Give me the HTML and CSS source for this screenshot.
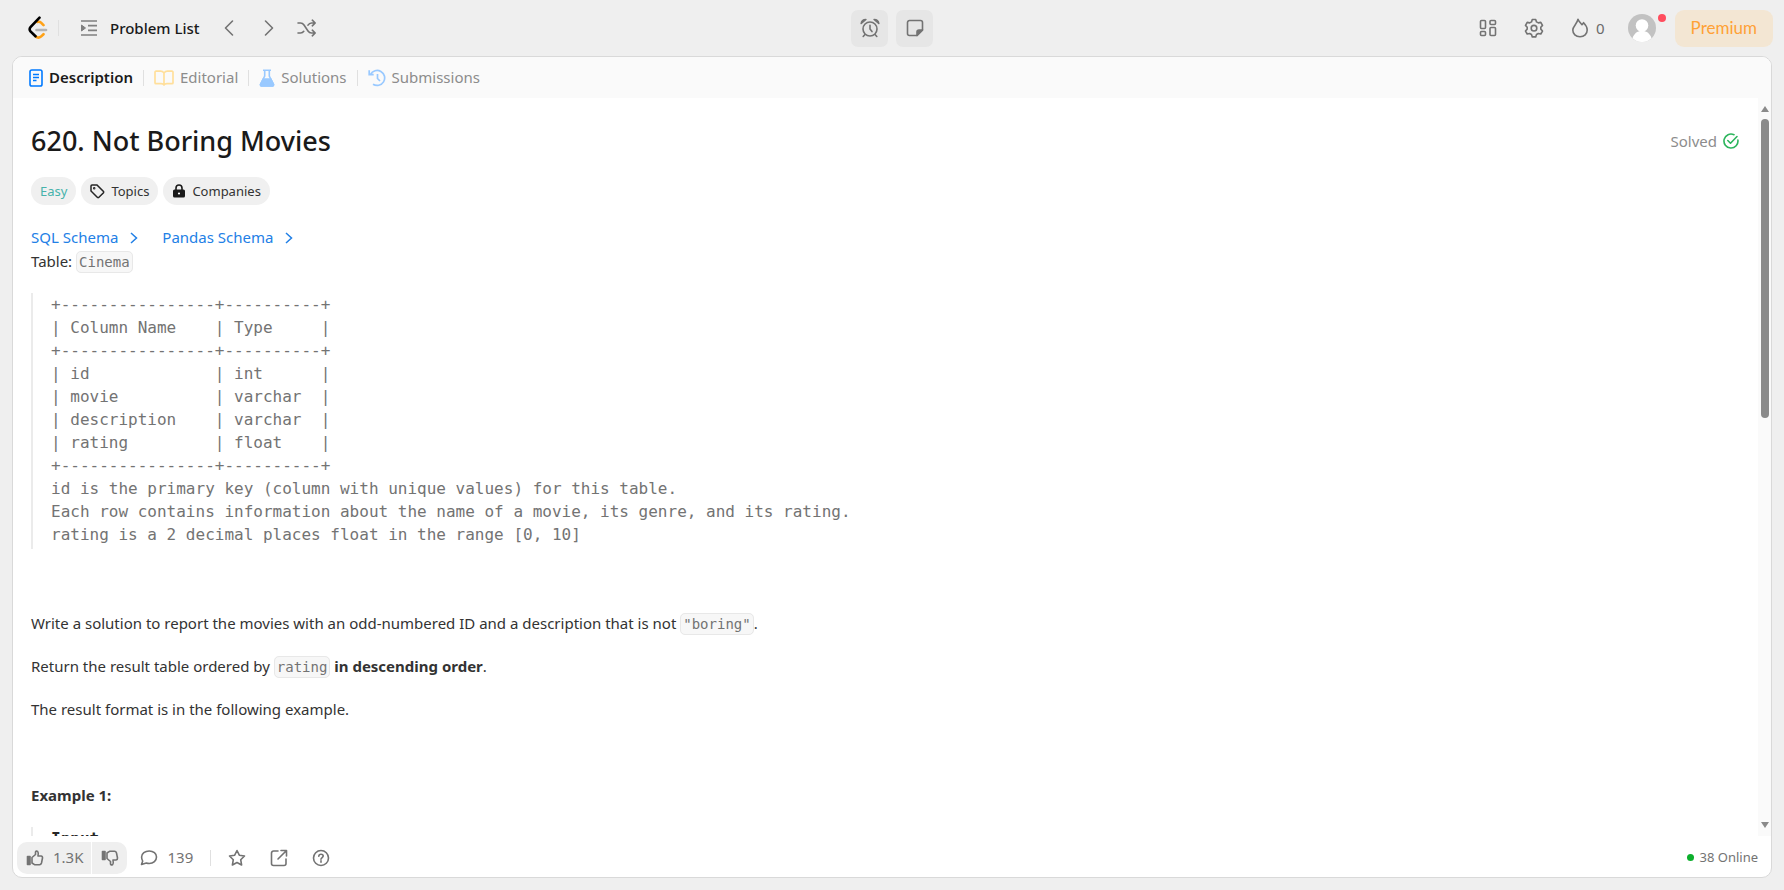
FILE: index.html
```html
<!DOCTYPE html>
<html lang="en">
<head>
	<meta charset="utf-8">
	<title>Not Boring Movies</title>
	<link rel="stylesheet" href="styles.css">
</head>
<body>
	<header class="topbar">
		<div class="topLeft">
			<a href="#" class="logo" aria-label="Home">
				<svg width="20" height="24" viewBox="0 0 20 24" fill="none" stroke-linecap="round" stroke-width="2.6">
					<path d="M9.500 6q2-.8 3.500.7l2.500 2.500M7.500 20.300q2.700 2.500 5.500.3l2.500-2.400" stroke="#ffa116"/>
					<path d="M8.500 14h9.500" stroke="#b3b3b3"/>
					<path d="M11.500 1.700L2.500 11.200q-1.700 2 0 4.200L7.500 20.300" stroke="#000"/>
				</svg>
			</a>
			<span class="divider"></span>
			<a href="#" class="problemList">
				<svg width="18" height="18" viewBox="0 0 18 18" fill="none" stroke="#808080" stroke-width="1.700">
					<path d="M1 2h16M8 6.700h9M8 11.300h9M1 16h16"/>
					<path d="M1.500 6l4 3-4 3z" fill="#808080" stroke-width="1"/>
				</svg>
				<span>Problem List</span>
			</a>
			<button class="arrow" aria-label="Previous">
				<svg width="12" height="18" viewBox="0 0 12 18"><path d="M9.500 2L2.500 9l7 7"/></svg>
			</button>
			<button class="arrow" aria-label="Next">
				<svg width="12" height="18" viewBox="0 0 12 18"><path d="M2.500 2l7 7-7 7"/></svg>
			</button>
			<button class="shuffle" aria-label="Random">
				<svg width="20" height="18" viewBox="0 0 20 18"><path d="M1 4h2.500c1.500 0 2.500.5 3.500 2l4 6c1 1.500 2 2 3.500 2H18M1 14h2.500c1.500 0 2.500-.5 3.300-1.700M11 6.200C12 4.600 13 4 14.500 4H18M15.300 1.200L18.200 4l-2.900 2.800M15.300 11.200l2.900 2.800-2.900 2.800"/></svg>
			</button>
		</div>

		<div class="topCenter">
			<button class="tool" aria-label="Timer">
				<svg width="20" height="20" viewBox="0 0 20 20"><circle cx="10" cy="11" r="7"/><path d="M10 7.200V11l2 2.600M5 16.500l-1.800 2M15 16.500l1.800 2"/><path d="M1.200 5.500q.5-4 4.700-4L1.200 5.500zM18.800 5.500q-.5-4-4.700-4l4.700 4z" fill="#737373"/></svg>
			</button>
			<button class="tool" aria-label="Notes">
				<svg width="18" height="18" viewBox="0 0 18 18"><path d="M11 16.500H3.500a2 2 0 0 1-2-2v-11a2 2 0 0 1 2-2h11a2 2 0 0 1 2 2V11z"/><path d="M11 16.500V13a2 2 0 0 1 2-2h3.500z" fill="#737373"/></svg>
			</button>
		</div>

		<div class="topRight">
			<button class="iconBtn" aria-label="Layout">
				<svg width="18" height="18" viewBox="0 0 18 18"><rect x="1.500" y="1.500" width="5" height="8" rx="1"/><rect x="11" y="1.500" width="5.500" height="4" rx="1"/><rect x="1.500" y="12.500" width="5" height="4" rx="1"/><rect x="11" y="8.500" width="5.500" height="8" rx="1"/></svg>
			</button>
			<button class="iconBtn" aria-label="Settings">
				<svg width="20" height="20" viewBox="0 0 20 20"><path d="M8.300 1.500h3.400l.8 2.400 1.800 1 2.500-.5 1.700 3-1.700 1.900v1.800l1.700 1.900-1.700 3-2.500-.5-1.800 1-.8 2.400H8.300l-.8-2.400-1.800-1-2.500.5-1.700-3 1.700-1.900V9.300L1.500 7.400l1.700-3 2.500.5 1.800-1z"/><circle cx="10" cy="10.200" r="2.800"/></svg>
			</button>
			<button class="streak">
				<svg width="18" height="20" viewBox="0 0 18 20"><path d="M7 1.200c.5 2 2.200 3.300 4 5.500l1.600-2c2 2 3.600 4.300 3.600 7.300 0 4-3 6.800-7.200 6.800S1.800 16 1.800 12c0-3.800 4.400-6 5.200-10.800z"/></svg>
				<span>0</span>
			</button>
			<button class="avatar" aria-label="Profile">
				<svg width="28" height="28" viewBox="0 0 28 28"><circle cx="14" cy="14" r="14" fill="#c2c2c2"/><circle cx="14" cy="11.500" r="6.300" fill="#fff"/><path d="M4.500 24.300C6 19.500 9 17 14 17s8 2.500 9.500 7.300A14 14 0 0 1 4.500 24.300z" fill="#fff"/></svg>
				<span class="dot"></span>
			</button>
			<a href="#" class="premium">Premium</a>
		</div>
	</header>

	<main class="panel">
		<nav class="tabs">
			<a href="#" class="tab active">
				<svg width="14" height="18" viewBox="0 0 14 18" fill="none" stroke="#007aff" stroke-width="1.600"><rect x="1" y="1" width="12" height="16" rx="1.800"/><path d="M4 5.500h6M4 8.500h6M4 11.500h3.500" stroke-width="1.400"/></svg>
				Description
			</a>
			<span class="divider"></span>
			<a href="#" class="tab">
				<svg width="20" height="16" viewBox="0 0 20 16" fill="none" stroke="#ffdf9b" stroke-width="1.700"><path d="M10 3v11.500M10 3C9 1.700 8 1.200 6.500 1.200H2a1 1 0 0 0-1 1v10.500a1 1 0 0 0 1 1h5c1.500 0 2.500.3 3 1.200.5-.9 1.500-1.200 3-1.200h5a1 1 0 0 0 1-1V2.200a1 1 0 0 0-1-1h-4.500C12 1.200 11 1.700 10 3z"/></svg>
				Editorial
			</a>
			<span class="divider"></span>
			<a href="#" class="tab">
				<svg width="16" height="18" viewBox="0 0 16 18" fill="none" stroke="#99c9ff" stroke-width="1.600"><path d="M4 1.200h8M5.700 1.200V7L1.500 15.200q-.5 1.600 1 1.800h11q1.500-.2 1-1.800L10.300 7V1.200"/><path d="M4.200 10h7.600l2.700 5.500-.8 1.500H2.300l-.8-1.500z" fill="#99c9ff"/></svg>
				Solutions
			</a>
			<span class="divider"></span>
			<a href="#" class="tab">
				<svg width="18" height="18" viewBox="0 0 18 18" fill="none" stroke="#99c9ff" stroke-width="1.700"><path d="M2.500 5.500A7.500 7.500 0 1 1 5 15.200M1.200 1.200v4.500h4.500M9.500 5v4.500l2.500 2.500"/></svg>
				Submissions
			</a>
		</nav>

		<div class="scroller">
			<article class="content">
				<div class="titleRow">
					<h1>620. Not Boring Movies</h1>
					<div class="solved">
						Solved
						<svg width="16" height="16" viewBox="0 0 16 16" fill="none" stroke="#2db55d" stroke-width="1.600" stroke-linecap="round" stroke-linejoin="round"><path d="M11 1.700A7 7 0 1 0 14.900 7"/><path d="M4.800 7.500l2.700 2.700L14 3.500"/></svg>
					</div>
				</div>

				<div class="chips">
					<span class="chip easy">Easy</span>
					<button class="chip">
						<svg width="15" height="15" viewBox="0 0 15 15" fill="none" stroke="#262626" stroke-width="1.500"><path d="M1 2a1 1 0 0 1 1-1h5l6.500 6.500a1 1 0 0 1 0 1.200l-4.800 4.800a1 1 0 0 1-1.200 0L1 7z"/><circle cx="4.200" cy="4.200" r=".5"/></svg>
						Topics
					</button>
					<button class="chip">
						<svg width="14" height="14" viewBox="0 0 14 14"><path d="M4 6V4a3 3 0 0 1 6 0v2" fill="none" stroke="#1a1a1a" stroke-width="1.600"/><rect x="1" y="5.500" width="12" height="8" rx="1.500" fill="#1a1a1a"/><circle cx="7" cy="9.500" r="1.100" fill="#fff"/></svg>
						Companies
					</button>
				</div>

				<div class="schemas">
					<a href="#">SQL Schema <svg width="8" height="12" viewBox="0 0 8 12"><path d="M1 1l5.500 5L1 11"/></svg></a>
					<a href="#">Pandas Schema <svg width="8" height="12" viewBox="0 0 8 12"><path d="M1 1l5.500 5L1 11"/></svg></a>
				</div>

				<p>Table: <code>Cinema</code></p>

				<pre>
+----------------+----------+
| Column Name    | Type     |
+----------------+----------+
| id             | int      |
| movie          | varchar  |
| description    | varchar  |
| rating         | float    |
+----------------+----------+
id is the primary key (column with unique values) for this table.
Each row contains information about the name of a movie, its genre, and its rating.
rating is a 2 decimal places float in the range [0, 10]
</pre>

				<p>&nbsp;</p>
				<p>Write a solution to report the movies with an odd-numbered ID and a description that is not <code>"boring"</code>.</p>
				<p>Return the result table ordered by <code>rating</code> <strong>in descending order</strong>.</p>
				<p>The result format is in the following example.</p>
				<p>&nbsp;</p>
				<p><strong>Example 1:</strong></p>

				<pre><strong>Input:</strong></pre>
			</article>

			<div class="scrollbar">
				<svg width="8" height="6" viewBox="0 0 8 6"><path d="M4 0l4 6H0z"/></svg>
				<div class="track"><div class="thumb"></div></div>
				<svg width="8" height="6" viewBox="0 0 8 6"><path d="M0 0h8L4 6z"/></svg>
			</div>
		</div>

		<footer class="footer">
			<div class="votes">
				<button class="vote">
					<svg width="18" height="16" viewBox="0 0 18 16"><path d="M1.500 6.500h2.500v8H1.500z" fill="#737373"/><path d="M6 7.500l3.500-3V2q.5-1.500 2.200-.5 1 1 .3 4.500h3q1.700.3 1.500 2l-1 5q-.5 1.700-2 1.700H8.500L6 13z"/></svg>
					1.3K
				</button>
				<button class="vote" aria-label="Dislike">
					<svg width="18" height="16" viewBox="0 0 18 16"><path d="M1.500 1.500h2.500v8H1.500z" fill="#737373"/><path d="M6 8.500l3.500 3V14q.5 1.500 2.200.5 1-1 .3-4.500h3q1.700-.3 1.500-2l-1-5q-.5-1.700-2-1.700H8.500L6 3z"/></svg>
				</button>
			</div>
			<button class="comments">
				<svg width="18" height="16" viewBox="0 0 18 16"><path d="M9.200 1c4.200 0 7.300 2.500 7.300 6s-3.100 6.500-7.300 6.500c-1.200 0-2-.2-2.900-.5L1.500 14.500l1.200-3.400C2 10 1.600 8.500 1.600 7c0-3.500 3.400-6 7.600-6z"/></svg>
				139
			</button>
			<span class="divider"></span>
			<div class="actions">
				<button aria-label="Favorite">
					<svg width="18" height="18" viewBox="0 0 18 18"><path d="M9 1.500l2.300 4.700 5.200.8-3.800 3.700.9 5.300L9 13.500 4.400 16l.9-5.300L1.500 7l5.200-.8z"/></svg>
				</button>
				<button aria-label="Share">
					<svg width="18" height="18" viewBox="0 0 18 18"><path d="M8 2H3.500a2 2 0 0 0-2 2v10.500a2 2 0 0 0 2 2H14a2 2 0 0 0 2-2V10M11 1.500h5.500V7M16.500 1.500L8 10"/></svg>
				</button>
				<button aria-label="Help">
					<svg width="18" height="18" viewBox="0 0 18 18"><circle cx="9" cy="9" r="7.500"/><path d="M6.800 7.200C6.900 5.800 7.800 5.200 9 5.200s2.200.7 2.200 1.900c0 1.300-1.900 1.500-2.200 3M9 11.700v1.500"/></svg>
				</button>
			</div>
			<div class="online"><span class="green"></span>38 Online</div>
		</footer>
	</main>
</body>
</html>
```
FILE: styles.css
```css
* {
	box-sizing: border-box;
}

body {
	margin: 0;
	height: 100vh;
	display: flex;
	flex-direction: column;
	overflow: hidden;
	background-color: #efefef;
	color: #333;
	font-family: "Noto Sans", "Open Sans", sans-serif;
	font-size: 15px;
	line-height: 23px;
}

button {
	display: flex;
	align-items: center;
	margin: 0;
	padding: 0;
	border: none;
	background: none;
	color: inherit;
	font: inherit;
	cursor: pointer;
}

a {
	color: inherit;
	text-decoration: none;
}

svg {
	display: block;
	flex-shrink: 0;
}

.divider {
	width: 1px;
	height: 16px;
	background-color: #e0e0e0;
}

/* top bar */
.topbar {
	display: grid;
	grid-template-columns: 1fr auto 1fr;
	align-items: center;
	height: 56px;
	padding: 0 11px;
}

.topLeft, .topCenter, .topRight {
	display: flex;
	align-items: center;
}

.topLeft {
	padding-left: 17px;
}

.topLeft .divider {
	margin: 0 21px 0 10px;
}

.problemList {
	display: flex;
	align-items: center;
	gap: 12px;
	margin-right: 23px;
	color: #1a1a1a;
	font-weight: 500;
}

.arrow svg, .shuffle svg, .tool svg, .iconBtn svg, .streak svg, .footer svg {
	fill: none;
	stroke: #737373;
	stroke-width: 1.6;
	stroke-linecap: round;
	stroke-linejoin: round;
}

.arrow {
	margin-right: 28px;
}

.shuffle {
	margin-left: -6px;
}

.topCenter {
	gap: 8px;
}

.tool {
	justify-content: center;
	width: 37px;
	height: 37px;
	border-radius: 7px;
	background-color: #e6e6e6;
}

.topRight {
	justify-content: flex-end;
}

.iconBtn {
	margin-right: 27px;
}

.streak {
	gap: 7px;
	margin-right: 23px;
	color: #6b6b6b;
}

.avatar {
	position: relative;
	margin-right: 19px;
}

.dot {
	position: absolute;
	top: 0;
	right: -10px;
	width: 8px;
	height: 8px;
	border-radius: 50%;
	background-color: #ff4d5e;
}

.premium {
	padding: 6px 16px 8px;
	border-radius: 9px;
	background-color: #f3e6d3;
	color: #ffa136;
	font-family: Lato, sans-serif;
	font-size: 17px;
}

/* panel */
.panel {
	flex: 1;
	min-height: 0;
	display: flex;
	flex-direction: column;
	margin: 0 12px 12px;
	border: 1px solid #d9d9d9;
	border-radius: 10px;
	background-color: #fff;
	overflow: hidden;
}

.tabs {
	display: flex;
	align-items: center;
	height: 41px;
	padding-left: 16px;
	background-color: #fafafa;
	color: #8c8c8c;
}

.tabs .divider {
	margin: 0 10px;
}

.tab {
	display: flex;
	align-items: center;
	gap: 6px;
}

.tab.active {
	color: #1a1a1a;
	font-weight: 600;
}

.scroller {
	flex: 1;
	min-height: 0;
	display: flex;
}

.content {
	flex: 1;
	padding: 23px 19px 0 18px;
	overflow: hidden;
}

.titleRow {
	display: flex;
	justify-content: space-between;
	align-items: center;
}

h1 {
	margin: 0;
	color: #1a1a1a;
	font-size: 27px;
	font-weight: 500;
	line-height: 40px;
}

.solved {
	display: flex;
	align-items: center;
	gap: 6px;
	color: #8c8c8c;
}

.chips {
	display: flex;
	gap: 5px;
	margin: 16px 0 20px;
}

.chip {
	display: flex;
	align-items: center;
	gap: 6px;
	height: 28px;
	padding: 0 9px;
	border-radius: 14px;
	background-color: #f0f0f0;
	font-size: 13px;
}

.easy {
	color: #46b3ab;
}

.schemas {
	display: flex;
	gap: 24px;
	color: #2280e6;
	line-height: 25px;
}

.schemas a {
	display: flex;
	align-items: center;
	gap: 12px;
}

.schemas svg {
	fill: none;
	stroke: #2280e6;
	stroke-width: 1.5;
}

p {
	margin: 0 0 20px;
}

code, pre {
	font-family: "DejaVu Sans Mono", monospace;
	color: #737373;
}

code {
	padding: 2px;
	border: 1px solid #e8e8e8;
	border-radius: 5px;
	background-color: #f7f7f7;
	font-size: 14px;
	line-height: 16px;
}

pre {
	margin: 0 0 20px;
	padding: 0 0 3px 18px;
	border-left: 2px solid #ebebeb;
	font-size: 16px;
}

pre strong {
	color: #262626;
}

.scrollbar {
	display: flex;
	flex-direction: column;
	align-items: center;
	width: 13px;
	padding: 8px 0;
	background-color: #fafafa;
}

.scrollbar svg {
	fill: #8a8a8a;
}

.track {
	flex: 1;
	width: 8px;
	padding: 7px 0;
}

.thumb {
	height: 43%;
	border-radius: 4px;
	background-color: #8a8a8a;
}

/* footer */
.footer {
	display: flex;
	align-items: center;
	height: 41px;
	padding: 2px 13px 0 4px;
	color: #737373;
}

.votes {
	display: flex;
	gap: 1px;
	border-radius: 10px;
	overflow: hidden;
}

.vote {
	gap: 9px;
	height: 32px;
	padding: 0 8px 0 9px;
	background-color: #efefef;
}

.comments {
	gap: 9px;
	margin-left: 13px;
}

.footer .divider {
	margin: 0 17px;
}

.actions {
	display: flex;
	gap: 24px;
}

.online {
	display: flex;
	align-items: center;
	gap: 5px;
	margin-left: auto;
	font-size: 13px;
}

.green {
	width: 7px;
	height: 7px;
	border-radius: 50%;
	background-color: #0caf2c;
}
```
